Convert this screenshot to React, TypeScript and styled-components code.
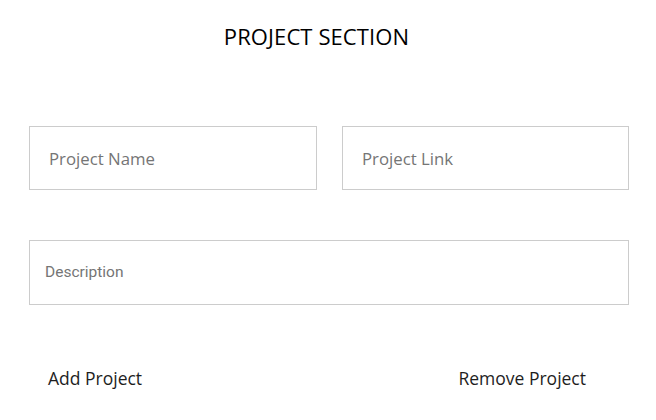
import React from "react";
import styled, { createGlobalStyle } from "styled-components";

const Global = createGlobalStyle`
  html, body { margin: 0; padding: 0; background: #ffffff; }
  body { font-family: "Open Sans", "Lato", sans-serif; }
  * { box-sizing: border-box; }
`;

const Page = styled.div`
  width: 656px;
  height: 420px;
  padding: 0 27px 0 29px;
  display: flex;
  flex-direction: column;
`;

const Title = styled.h2`
  margin: 22px 0 0 0;
  padding-right: 25px;
  text-align: center;
  font-family: "Open Sans", sans-serif;
  font-weight: 400;
  font-size: 22px;
  line-height: 28px;
  color: #000000;
  letter-spacing: 0.1px;
`;

const Row = styled.div`
  display: grid;
  grid-template-columns: 288px 287px;
  column-gap: 25px;
  margin-top: 76px;
`;

const Field = styled.input`
  width: 100%;
  height: 64px;
  border: 1px solid #cccccc;
  padding: 0 19px;
  font-family: "Open Sans", sans-serif;
  font-size: 16.8px;
  color: #333;
  outline: none;
  background: #fff;
  &::placeholder { color: #757575; }
`;

const Area = styled.textarea`
  width: 600px;
  height: 65px;
  margin-top: 50px;
  border: 1px solid #cccccc;
  padding: 20px 15px;
  font-family: Roboto, sans-serif;
  font-size: 15.5px;
  line-height: 22px;
  resize: none;
  outline: none;
  display: block;
  &::placeholder { color: #757575; }
`;

const Actions = styled.div`
  display: flex;
  justify-content: space-between;
  align-items: center;
  margin-top: 61px;
  padding: 0 43px 0 19px;
`;

const TextButton = styled.button`
  background: none;
  border: none;
  padding: 0;
  font-family: "Open Sans", sans-serif;
  font-size: 17.5px;
  line-height: 24px;
  color: #1e1e1e;
  cursor: pointer;
`;

export default function App() {
  return (
    <>
      <Global />
      <Page>
        <Title>PROJECT SECTION</Title>
        <Row>
          <Field placeholder="Project Name" />
          <Field placeholder="Project Link" />
        </Row>
        <Area placeholder="Description" />
        <Actions>
          <TextButton>Add Project</TextButton>
          <TextButton>Remove Project</TextButton>
        </Actions>
      </Page>
    </>
  );
}
